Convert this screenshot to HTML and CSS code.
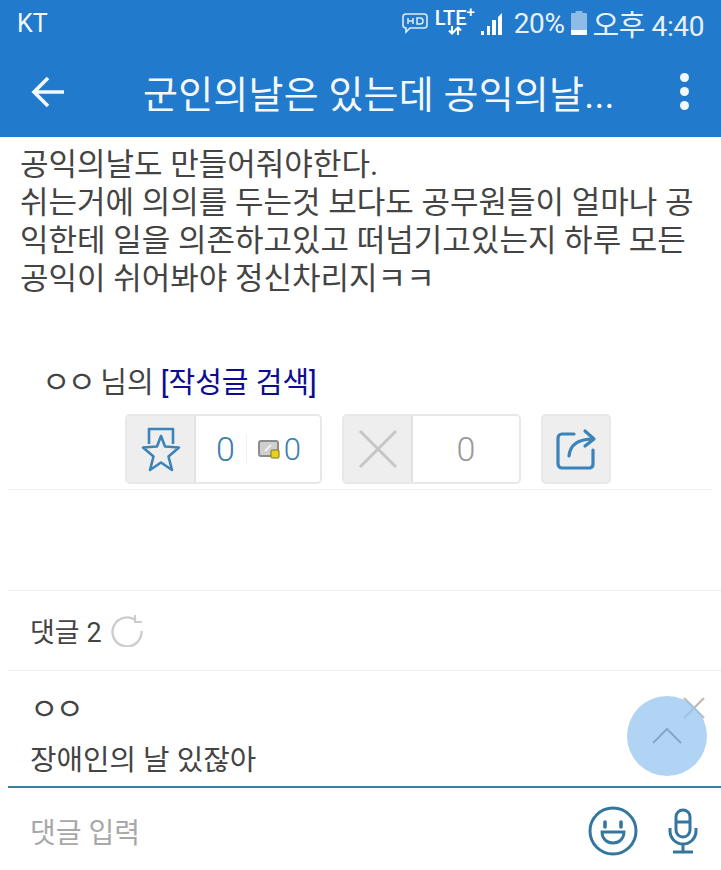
FILE: index.html
```html
<!DOCTYPE html>
<html lang="ko">
  <head>
    <meta charset="UTF-8" />
    <meta name="viewport" content="width=device-width, initial-scale=1.0" />
    <link rel="stylesheet" href="styles.css">
    <title>군인의날은 있는데 공익의날...</title>
  </head>
  <body>
    <header class="appbar">
      <div class="status">
        <span class="carrier">KT</span>
        <div class="status-right">
          <svg class="ic-hd" width="28" height="24" viewBox="0 0 28 24" fill="none" stroke="#dcecf8" stroke-width="1.6">
            <path d="M5 3h18a3 3 0 0 1 3 3v8a3 3 0 0 1-3 3H9l-4 4v-4a3 3 0 0 1-3-3V6a3 3 0 0 1 3-3z"/>
            <path d="M7 7v6M7 10h5M12 7v6M16 7v6h3a3 3 0 0 0 0-6z" stroke-width="1.5"/>
          </svg>
          <div class="lte">
            <span class="lte-text">LTE<sup>+</sup></span>
            <svg width="14" height="9" viewBox="0 0 14 9" fill="none" stroke="#fff" stroke-width="2">
              <path d="M4 0v7M1 4.5l3 3 3-3M10 9V2M7 4.5l3-3 3 3"/>
            </svg>
          </div>
          <svg class="ic-signal" width="24" height="24" viewBox="0 0 24 24" fill="#fff">
            <path d="M1 24h3v-4H1zM7 24h3V15H7zM12 24h4V9h-4z"/>
            <path d="M18 24h4V2l-4 4z"/>
          </svg>
          <span class="status-text batt-text">20%</span>
          <svg class="ic-batt" width="16" height="24" viewBox="0 0 14 24" preserveAspectRatio="none">
            <path d="M4 0h6v2h3a1 1 0 0 1 1 1v20a1 1 0 0 1-1 1H1a1 1 0 0 1-1-1V3a1 1 0 0 1 1-1h3z" fill="#8fbce6"/>
            <path d="M0 19h14v4a1 1 0 0 1-1 1H1a1 1 0 0 1-1-1z" fill="#fff"/>
          </svg>
          <span class="status-text clock"><span class="ampm">오후</span> 4:40</span>
        </div>
      </div>
      <div class="toolbar">
        <svg class="ic-back" width="36" height="34" viewBox="0 0 36 34" fill="none" stroke="#f2f8fd" stroke-width="3.6">
          <path d="M34 17H4M18 3L4 17l14 14"/>
        </svg>
        <h1 class="title">군인의날은 있는데 공익의날...</h1>
        <div class="more"><i></i><i></i><i></i></div>
      </div>
    </header>

    <main>
      <article class="post">
        <p>공익의날도 만들어줘야한다.</p>
        <p>쉬는거에 의의를 두는것 보다도 공무원들이 얼마나 공익한테 일을 의존하고있고 떠넘기고있는지 하루 모든 공익이 쉬어봐야 정신차리지ㅋㅋ</p>
      </article>

      <div class="author"><span class="nick">ㅇㅇ</span> 님의 <a class="search-link">[작성글 검색]</a></div>

      <div class="actions">
        <div class="vote vote-up">
          <span class="vote-icon">
            <svg width="44" height="46" viewBox="0 0 44 46" fill="none" stroke="#3b83b8" stroke-width="2.6" stroke-linejoin="round">
              <path d="M10 18V3h24v15"/>
              <path d="M22 10l4 10.500 14 1-10.500 9 3.500 13.500-11-7.500-11 7.500 3.500-13.500-10.500-9 14-1z" fill="#eeeeee"/>
            </svg>
          </span>
          <span class="count">0</span>
          <span class="vote-sep"></span>
          <span class="fixed-count">
            <svg width="22" height="20" viewBox="0 0 22 20">
              <rect x="1" y="2" width="19" height="15" rx="2" fill="#cfcfcf" stroke="#8c8c8c" stroke-width="2"/>
              <path d="M7 12l6-6" stroke="#f2f2f2" stroke-width="2"/>
              <rect x="13" y="11" width="8" height="8" rx="1" fill="#e8d21f" stroke="#7d7420"/>
            </svg>
            <span class="count">0</span>
          </span>
        </div>
        <div class="vote vote-down">
          <span class="vote-icon">
            <svg width="40" height="40" viewBox="0 0 40 40" fill="none" stroke="#c6c6c6" stroke-width="3">
              <path d="M2 2l36 36M38 2L2 38"/>
            </svg>
          </span>
          <span class="count count-grey">0</span>
        </div>
        <div class="share">
          <svg width="42" height="42" viewBox="0 0 42 42" fill="none" stroke="#3b83b8" stroke-width="3.200" stroke-linecap="round" stroke-linejoin="round">
            <path d="M19 6H7a4 4 0 0 0-4 4v26a4 4 0 0 0 4 4h28a4 4 0 0 0 3-4V22"/>
            <path d="M14 28c1-10 8-17 24-17M30 3l9 8-9 7"/>
          </svg>
        </div>
      </div>

      <section class="comments">
        <div class="comments-head">
          <span>댓글 2</span>
          <svg width="32" height="32" viewBox="0 0 32 32" fill="none" stroke="#cdcdcd" stroke-width="2.400">
            <path d="M25 5.500A14.500 14.500 0 1 0 30.500 16"/>
            <path d="M24 0v7h7" stroke-width="2"/>
          </svg>
        </div>
        <div class="comment">
          <div class="comment-name"><span class="nick">ㅇㅇ</span></div>
          <div class="comment-text">장애인의 날 있잖아</div>
        </div>
      </section>

      <svg class="comment-close" width="24" height="24" viewBox="0 0 24 24" stroke="#bdbdbd" stroke-width="2.400">
        <path d="M2 2l20 20M22 2L2 22"/>
      </svg>
      <button class="fab" type="button">
        <svg width="32" height="18" viewBox="0 0 32 18" fill="none" stroke="#83a9c9" stroke-width="2">
          <path d="M2 16L16 2l14 14"/>
        </svg>
      </button>

      <div class="reply-bar">
        <span class="reply-input">댓글 입력</span>
        <svg class="ic-smile" width="50" height="50" viewBox="0 0 50 50" fill="none" stroke="#35769f" stroke-width="3">
          <circle cx="25" cy="25" r="23"/>
          <path d="M14 26h22c0 7-5 11-11 11s-11-4-11-11z" stroke-width="2.800"/>
          <path d="M17 16v5M33 16v5" stroke-width="3.600" stroke-linecap="round"/>
        </svg>
        <svg class="ic-mic" width="30" height="46" viewBox="0 0 30 46" fill="none" stroke="#35769f" stroke-width="3">
          <rect x="8" y="2" width="14" height="27" rx="7"/>
          <path d="M8 14h14" />
          <path d="M2 20v3a13 13 0 0 0 26 0v-3M15 36v8M5 44h20"/>
        </svg>
      </div>
    </main>
    <script>
    </script>
  </body>
</html>
```

FILE: styles.css
```css
* {
  margin: 0;
  padding: 0;
  box-sizing: border-box;
}

html,
body {
  height: 870px;
  overflow: hidden;
}

body {
  font-family: Roboto, "Noto Sans CJK KR", "Liberation Sans", sans-serif;
  color: #444;
  background-color: #fff;
  width: 721px;
}

/* HEADER */
.appbar {
  background-color: #217acb;
  color: #f2f8fd;
  height: 137px;
}

.status {
  height: 46px;
  padding: 0 17px 0 17px;
  display: flex;
  align-items: center;
  justify-content: space-between;
}

.carrier {
  font-size: 25px;
}

.status-right {
  display: flex;
  align-items: center;
  gap: 6px;
}

.status-text {
  font-size: 28px;
  letter-spacing: -0.4px;
  color: #e6f1fa;
  white-space: nowrap;
}

.batt-text {
  margin-left: 4px;
}

.ampm {
  font-size: 29px;
}

.lte {
  display: flex;
  flex-direction: column;
  align-items: center;
  width: 38px;
  margin: 0 0 0 1px;
}

.lte-text {
  font-size: 20px;
  line-height: 15px;
  font-weight: 500;
  color: #fff;
}

.lte-text sup {
  font-size: 15px;
  line-height: 0;
}

.toolbar {
  height: 91px;
  padding: 0 32px 0 30px;
  display: flex;
  align-items: center;
}

.title {
  font-size: 38px;
  font-weight: 400;
  margin-left: 77px;
  flex: 1;
  white-space: nowrap;
  letter-spacing: 0.2px;
}

.more {
  display: flex;
  flex-direction: column;
  gap: 5px;
}

.more i {
  display: block;
  width: 9px;
  height: 9px;
  border-radius: 50%;
  background-color: #f2f8fd;
}

/* POST */
.post {
  padding: 9px 16px 0 20px;
  font-size: 31px;
  line-height: 38px;
  height: 227px;
  color: #444;
  word-break: break-all;
}

.author {
  padding-left: 42px;
  font-size: 29px;
  line-height: 38px;
  color: #444;
}

.nick {
  letter-spacing: -3px;
  font-size: 31px;
}

.search-link {
  color: #0c0c92;
}

.actions {
  margin: 12px 8px 0 8px;
  padding-left: 117px;
  height: 76px;
  display: flex;
  gap: 20px;
  border-bottom: 1px solid #f2f2f2;
}

.vote {
  height: 70px;
  display: flex;
  align-items: center;
  border: 2px solid #e8e8e8;
  border-radius: 5px;
  background-color: #fff;
  font-size: 33px;
  color: #3b7fae;
}

.vote-up {
  width: 197px;
}

.vote-down {
  width: 179px;
}

.vote-icon {
  width: 69px;
  height: 100%;
  background-color: #eeeeee;
  border-right: 2px solid #e2e2e2;
  display: flex;
  align-items: center;
  justify-content: center;
  flex-shrink: 0;
}

.count {
  font-size: 34px;
  font-weight: 300;
}

.vote-up > .count {
  margin-left: 20px;
}

.count-grey {
  color: #999;
  flex: 1;
  text-align: center;
}

.vote-sep {
  width: 1px;
  height: 30px;
  margin: 0 11px 0 11px;
  background-color: #f2f2f2;
}

.fixed-count {
  display: flex;
  align-items: center;
  gap: 4px;
}

.fixed-count .count {
  font-size: 31px;
  font-weight: 300;
}

.share {
  width: 70px;
  height: 70px;
  background-color: #eeeeee;
  border: 2px solid #e8e8e8;
  border-radius: 5px;
  display: flex;
  align-items: center;
  justify-content: center;
}

/* COMMENTS */
.comments {
  margin: 100px 0 0 8px;
  border-top: 1px solid #eeeeee;
}

.comments-head {
  height: 80px;
  padding-left: 22px;
  display: flex;
  align-items: center;
  gap: 9px;
  font-size: 27px;
  color: #444;
  border-bottom: 1px solid #eeeeee;
}

.comment {
  padding: 18px 0 0 22px;
  height: 117px;
  font-size: 28.8px;
  color: #444;
  border-bottom: 2px solid #3a7ea8;
}

.comment-name {
  line-height: 42px;
}

.comment-text {
  line-height: 44px;
  margin-top: 7px;
}

.comment-close {
  position: absolute;
  top: 696px;
  left: 682px;
}

.fab {
  position: absolute;
  top: 696px;
  left: 627px;
  width: 80px;
  height: 80px;
  border: none;
  border-radius: 50%;
  background-color: rgba(151, 197, 240, 0.75);
  display: flex;
  align-items: center;
  justify-content: center;
}

.reply-bar {
  height: 86px;
  padding: 0 23px 0 30px;
  display: flex;
  align-items: center;
}

.reply-input {
  flex: 1;
  font-size: 28px;
  color: #a8a8a8;
}

.ic-mic {
  margin-left: 30px;
}
```
